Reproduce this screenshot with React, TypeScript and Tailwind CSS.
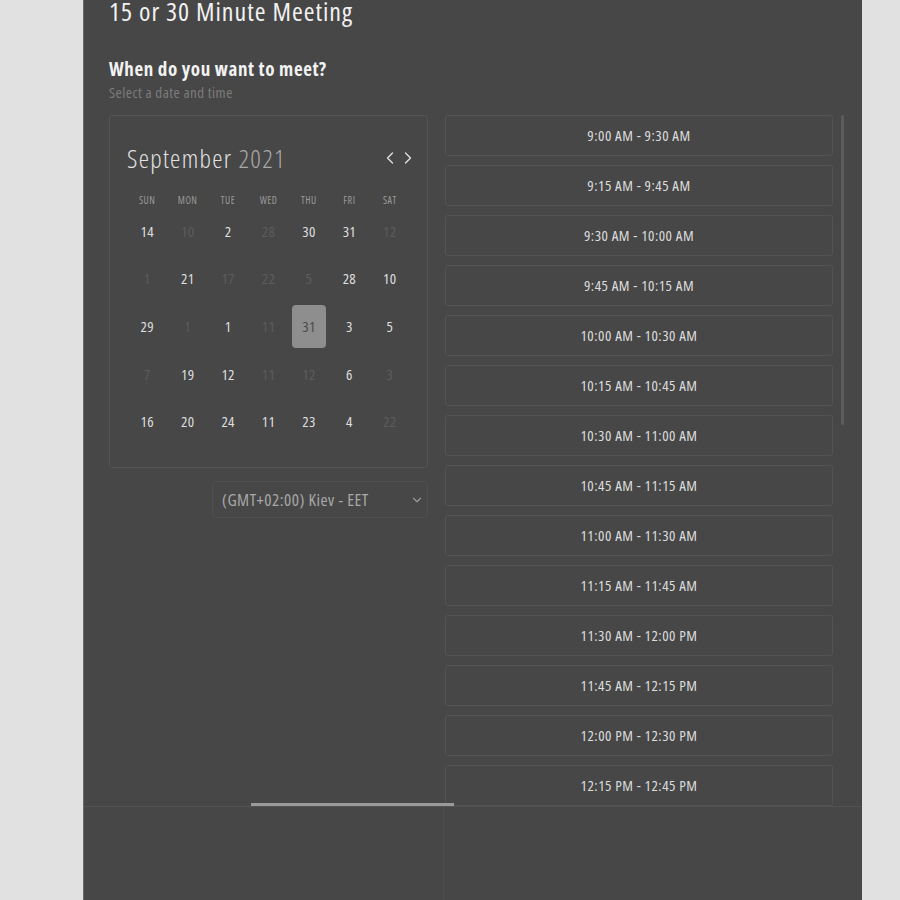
import { ChevronDown, ChevronLeft, ChevronRight } from "lucide-react";

const weekdays = ["SUN", "MON", "TUE", "WED", "THU", "FRI", "SAT"];

// [day, enabled]
const weeks: [number, boolean][][] = [
  [[14, true], [10, false], [2, true], [28, false], [30, true], [31, true], [12, false]],
  [[1, false], [21, true], [17, false], [22, false], [5, false], [28, true], [10, true]],
  [[29, true], [1, false], [1, true], [11, false], [31, true], [3, true], [5, true]],
  [[7, false], [19, true], [12, true], [11, false], [12, false], [6, true], [3, false]],
  [[16, true], [20, true], [24, true], [11, true], [23, true], [4, true], [22, false]],
];

const slots = [
  "9:00 AM - 9:30 AM",
  "9:15 AM - 9:45 AM",
  "9:30 AM - 10:00 AM",
  "9:45 AM - 10:15 AM",
  "10:00 AM - 10:30 AM",
  "10:15 AM - 10:45 AM",
  "10:30 AM - 11:00 AM",
  "10:45 AM - 11:15 AM",
  "11:00 AM - 11:30 AM",
  "11:15 AM - 11:45 AM",
  "11:30 AM - 12:00 PM",
  "11:45 AM - 12:15 PM",
  "12:00 PM - 12:30 PM",
  "12:15 PM - 12:45 PM",
];

function Calendar() {
  return (
    <div className="h-[353px] rounded-[3px] border border-[#535353] px-[17px] pt-[25px]">
      <div className="flex items-center justify-between">
        <div className="text-[26px] font-light leading-[34px] tracking-[1.3px]">
          <span className="text-[#e2e2e2]">September</span>{" "}
          <span className="text-[#a9a9a9]">2021</span>
        </div>
        <div className="-mr-[8px] flex text-[#e0e0e0]">
          <ChevronLeft size={20} strokeWidth={1.6} />
          <ChevronRight size={20} strokeWidth={1.6} className="-ml-[2px]" />
        </div>
      </div>
      <div className="mt-[18px] grid grid-cols-7 text-center text-[10px] tracking-[0.5px] text-[#9a9a9a]">
        {weekdays.map((d) => (
          <div key={d}>{d}</div>
        ))}
      </div>
      <div className="-mt-[1px] grid grid-cols-7">
        {weeks.flat().map(([day, on], i) => {
          const selected = i === 18;
          return (
            <div key={i} className="flex h-[47.7px] items-center justify-center">
              <div
                className={
                  selected
                    ? "flex h-[43px] w-[34px] items-center justify-center rounded-[4px] bg-[#8e8e8e] text-[15px] tracking-[0.3px] text-[#4a4a4a]"
                    : on
                      ? "text-[15px] tracking-[0.3px] text-[#dedede]"
                      : "text-[15px] tracking-[0.3px] text-[#5c5c5c]"
                }
              >
                {day}
              </div>
            </div>
          );
        })}
      </div>
    </div>
  );
}

export default function App() {
  return (
    <div
      className="min-h-[900px] bg-[#e1e1e1] [font-stretch:75%]"
      style={{ fontFamily: '"Open Sans", "Noto Sans", sans-serif' }}
    >
      <div className="ml-[83px] flex h-[900px] w-[779px] flex-col border-l border-[#6a6a6a] bg-[#474747]">
        <div className="relative h-[806px] overflow-hidden pl-[25px]">
          <h1 className="-mt-[7px] text-[26px] leading-[36px] tracking-[1px] text-[#f1f1f1]">
            15 or 30 Minute Meeting
          </h1>
          <h2 className="mt-[27px] text-[19px] font-bold leading-[26px] tracking-[0.6px] text-[#f2f2f2]">
            When do you want to meet?
          </h2>
          <p className="text-[15px] leading-[20px] tracking-[0.45px] text-[#7c7c7c]">Select a date and time</p>
          <div className="mt-[13px] flex gap-[17px]">
            <div className="w-[319px] shrink-0">
              <Calendar />
              <div className="mt-[13px] ml-[103px] flex h-[37px] items-center justify-between rounded-[4px] border border-[#505050] pl-[9px] pr-[3px]">
                <span className="text-[17px] tracking-[0.5px] text-[#a8a8a8]">(GMT+02:00) Kiev - EET</span>
                <ChevronDown size={14} className="text-[#9a9a9a]" />
              </div>
            </div>
            <div className="flex gap-[8px]">
              <div className="flex w-[388px] shrink-0 flex-col gap-[9px]">
                {slots.map((s) => (
                  <div
                    key={s}
                    className="flex h-[41px] items-center justify-center rounded-[3px] border border-[#535353] text-[15px] tracking-[0.5px] text-[#dcdcdc]"
                  >
                    {s}
                  </div>
                ))}
              </div>
              <div className="h-[310px] w-[3px] rounded-full bg-[#5c5c5c]" />
            </div>
          </div>
          <div className="absolute bottom-0 left-[167px] h-[3px] w-[203px] bg-[#9a9a9a]" />
        </div>
        <div className="grid flex-1 grid-cols-[360px_1fr] border-t border-[#525252]">
          <div className="border-r border-[#4d4d4d]" />
          <div />
        </div>
      </div>
    </div>
  );
}
